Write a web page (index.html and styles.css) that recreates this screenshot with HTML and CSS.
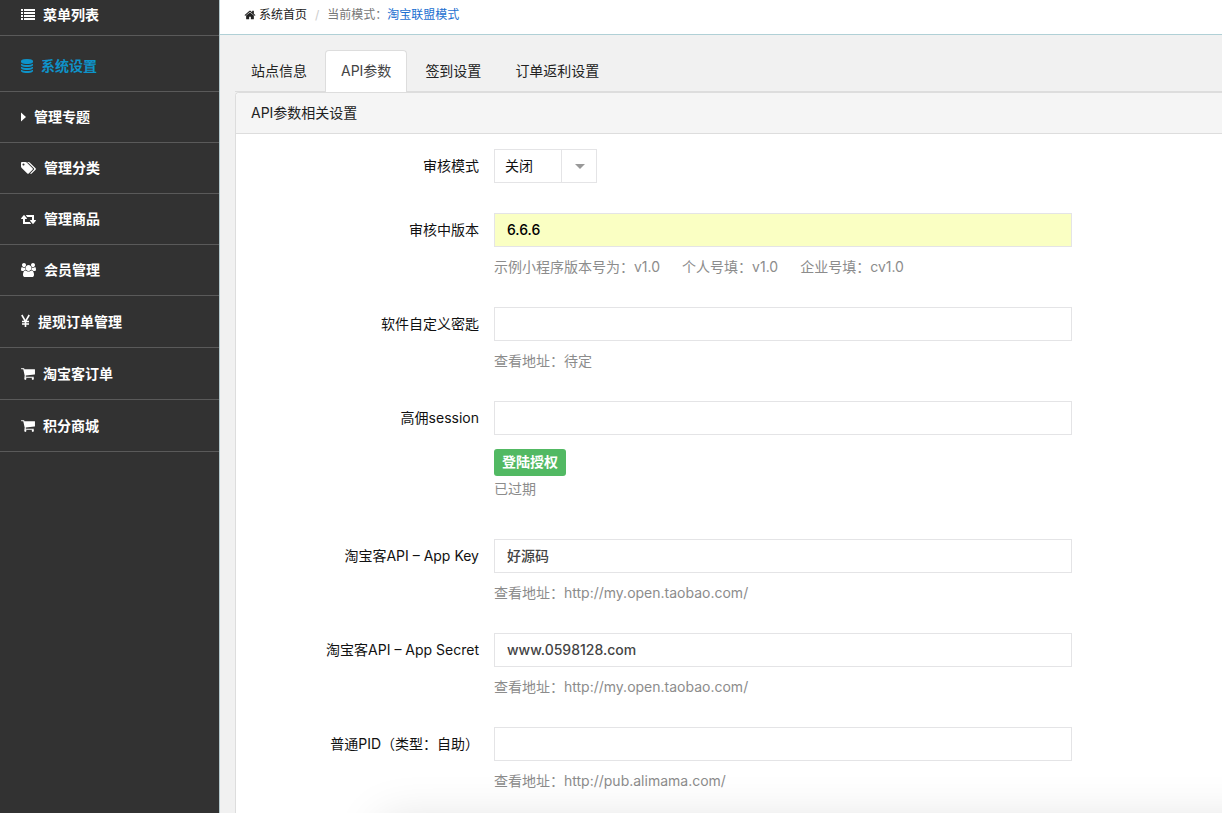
FILE: index.html
```html
<!DOCTYPE html>
<html lang="zh-CN">
<head>
<meta charset="utf-8">
<meta name="viewport" content="width=device-width, initial-scale=1">
<title>系统设置</title>
<link rel="stylesheet" href="styles.css">
</head>
<body>
<svg class="sprite" aria-hidden="true">
  <symbol id="cart" viewBox="0 0 1664 1792"><path d="M640 1536q0 52-38 90t-90 38-90-38-38-90 38-90 90-38 90 38 38 90zm896 0q0 52-38 90t-90 38-90-38-38-90 38-90 90-38 90 38 38 90zm128-1088v512q0 24-16.500 42.500t-40.500 21.500l-1044 122q13 60 13 70 0 16-24 64h920q26 0 45 19t19 45-19 45-45 19h-1024q-26 0-45-19t-19-45q0-11 8-31.500t16-36 21.500-40 15.500-29.500l-177-823h-204q-26 0-45-19t-19-45 19-45 45-19h256q16 0 28.500 6.500t19.500 15.500 13 24.500 8 26 5.500 29.500 4.500 26h1201q26 0 45 19t19 45z"/></symbol>
</svg>
<div class="app">
  <nav class="sidebar" aria-label="菜单">
    <a class="item item-head" href="#">
      <svg class="icon" width="14" height="14" viewBox="0 0 14 14"><path d="M0 1h2v2H0zM3 1h11v2H3zM0 4h2v2H0zM3 4h11v2H3zM0 7h2v2H0zM3 7h11v2H3zM0 10h2v2H0zM3 10h11v2H3z"/></svg>
      <span>菜单列表</span>
    </a>
    <a class="item item-active" href="#">
      <svg class="icon" width="12" height="14" viewBox="0 0 1536 1792"><path d="M768 768q237 0 443-43t325-127v170q0 69-103 128t-280 93.500-385 34.500-385-34.500-280-93.500-103-128v-170q119 84 325 127t443 43zm0 768q237 0 443-43t325-127v170q0 69-103 128t-280 93.500-385 34.500-385-34.500-280-93.500-103-128v-170q119 84 325 127t443 43zm0-384q237 0 443-43t325-127v170q0 69-103 128t-280 93.500-385 34.500-385-34.500-280-93.500-103-128v-170q119 84 325 127t443 43zm0-1152q208 0 385 34.500t280 93.500 103 128v128q0 69-103 128t-280 93.500-385 34.500-385-34.500-280-93.500-103-128v-128q0-69 103-128t280-93.500 385-34.500z"/></svg>
      <span>系统设置</span>
    </a>
    <a class="item" href="#">
      <svg class="icon" width="5" height="14" viewBox="0 0 5 14"><path d="M0 2.500l5 4.500-5 4.500z"/></svg>
      <span>管理专题</span>
    </a>
    <a class="item" href="#">
      <svg class="icon" width="15" height="14" viewBox="128 0 1920 1792"><path d="M576 448q0-53-37.500-90.500t-90.500-37.500-90.500 37.500-37.500 90.500 37.500 90.500 90.500 37.500 90.500-37.500 37.500-90.500zm1067 576q0 53-37 90l-491 492q-39 37-91 37-53 0-90-37l-715-716q-38-37-64.500-101t-26.500-117v-416q0-52 38-90t90-38h416q53 0 117 26.500t102 64.500l715 714q37 39 37 91zm384 0q0 53-37 90l-491 492q-39 37-91 37-36 0-59-14t-53-45l470-470q37-37 37-90 0-52-37-91l-715-714q-38-38-102-64.500t-117-26.500h224q53 0 117 26.500t102 64.500l715 714q37 39 37 91z"/></svg>
      <span>管理分类</span>
    </a>
    <a class="item" href="#">
      <svg class="icon" width="15" height="14" viewBox="0 0 1920 1792"><path d="M1280 1504q0 13-9.500 22.500t-22.500 9.500h-960q-8 0-13.500-2t-9-7-5.500-8-3-11.500-1-11.500v-600h-192q-26 0-45-19t-19-45q0-24 15-41l320-384q19-22 49-22t49 22l320 384q15 17 15 41 0 26-19 45t-45 19h-192v384h576q16 0 25 11l160 192q7 10 7 21zm640-416q0 24-15 41l-320 384q-20 23-49 23t-49-23l-320-384q-15-17-15-41 0-26 19-45t45-19h192v-384h-576q-16 0-25-12l-160-192q-7-9-7-20 0-13 9.500-22.500t22.500-9.500h960q8 0 13.500 2t9 7 5.500 8 3 11.500 1 11.500v600h192q26 0 45 19t19 45z"/></svg>
      <span>管理商品</span>
    </a>
    <a class="item" href="#">
      <svg class="icon" width="15" height="14" viewBox="0 0 1920 1792"><path d="M593 896q-162 5-265 128h-134q-82 0-138-40.500t-56-118.500q0-353 124-353 6 0 43.500 21t97.500 42.500 119 21.500q67 0 133-23-5 37-5 66 0 139 81 256zm1071 637q0 120-73 189.500t-194 69.500h-874q-121 0-194-69.500t-73-189.500q0-53 3.500-103.500t14-109 26.500-108.500 43-97.500 62-81 85.500-53.500 111.500-20q10 0 43 21.500t73 48 107 48 135 21.500 135-21.500 107-48 73-48 43-21.500q61 0 111.500 20t85.500 53.500 62 81 43 97.500 26.500 108.500 14 109 3.500 103.500zm-1024-1277q0 106-75 181t-181 75-181-75-75-181 75-181 181-75 181 75 75 181zm704 384q0 159-112.500 271.500t-271.500 112.500-271.500-112.500-112.500-271.500 112.500-271.500 271.500-112.500 271.500 112.500 112.500 271.500zm576 225q0 78-56 118.500t-138 40.500h-134q-103-123-265-128 81-117 81-256 0-29-5-66 66 23 133 23 59 0 119-21.500t97.500-42.500 43.500-21q124 0 124 353zm-128-609q0 106-75 181t-181 75-181-75-75-181 75-181 181-75 181 75 75 181z"/></svg>
      <span>会员管理</span>
    </a>
    <a class="item item-tall" href="#">
      <svg class="icon icon-line" width="9" height="16" viewBox="0 0 9 16"><path d="M.8 1L4.500 7.500 8.200 1M4.500 7v6M1 7.500h7M1 10h7"/></svg>
      <span>提现订单管理</span>
    </a>
    <a class="item item-tall" href="#">
      <svg class="icon" width="14" height="15"><use href="#cart"/></svg>
      <span>淘宝客订单</span>
    </a>
    <a class="item item-tall" href="#">
      <svg class="icon" width="14" height="15"><use href="#cart"/></svg>
      <span>积分商城</span>
    </a>
  </nav>

  <div class="content">
    <header class="crumbs">
      <a class="home" href="#">
        <svg class="icon" width="12" height="12" viewBox="0 0 1664 1792"><path d="M1408 992v480q0 26-19 45t-45 19h-384v-384h-256v384h-384q-26 0-45-19t-19-45v-480q0-1 .5-3t.5-3l575-474 575 474q1 2 1 6zm223-69l-62 74q-8 9-21 11h-3q-13 0-21-7l-692-577-692 577q-12 8-24 7-13-2-21-11l-62-74q-8-10-7-23.500t11-21.500l719-599q32-26 76-26t76 26l244 204v-195q0-14 9-23t23-9h192q14 0 23 9t9 23v408l219 182q10 8 11 21.500t-7 23.500z"/></svg>
        <span>系统首页</span>
      </a>
      <span class="slash">/</span>
      <span class="mode">当前模式：<a href="#">淘宝联盟模式</a></span>
    </header>

    <main class="main">
      <div class="tabs">
        <a class="tab" href="#">站点信息</a>
        <a class="tab tab-active" href="#">API参数</a>
        <a class="tab" href="#">签到设置</a>
        <a class="tab" href="#">订单返利设置</a>
      </div>
      <section class="panel">
        <h1 class="panel-title">API参数相关设置</h1>
        <form class="form">
          <div class="group">
            <label class="label" for="audit">审核模式</label>
            <div class="field">
              <div class="picker">
                <select id="audit"><option>关闭</option><option>开启</option></select>
                <span class="picker-arrow"></span>
              </div>
            </div>
          </div>
          <div class="group">
            <label class="label" for="version">审核中版本</label>
            <div class="field">
              <input class="input input-filled" id="version" type="text" value="6.6.6">
              <p class="help help-list"><span>示例小程序版本号为：v1.0</span><span>个人号填：v1.0</span><span>企业号填：cv1.0</span></p>
            </div>
          </div>
          <div class="group">
            <label class="label" for="secret">软件自定义密匙</label>
            <div class="field">
              <input class="input" id="secret" type="text">
              <p class="help">查看地址：待定</p>
            </div>
          </div>
          <div class="group group-session">
            <label class="label" for="session">高佣session</label>
            <div class="field">
              <input class="input" id="session" type="text">
              <button class="auth" type="button">登陆授权</button>
              <p class="status">已过期</p>
            </div>
          </div>
          <div class="group">
            <label class="label" for="appkey">淘宝客API – App Key</label>
            <div class="field">
              <input class="input" id="appkey" type="text" value="好源码">
              <p class="help">查看地址：http://my.open.taobao.com/</p>
            </div>
          </div>
          <div class="group">
            <label class="label" for="appsecret">淘宝客API – App Secret</label>
            <div class="field">
              <input class="input" id="appsecret" type="text" value="www.0598128.com">
              <p class="help">查看地址：http://my.open.taobao.com/</p>
            </div>
          </div>
          <div class="group">
            <label class="label" for="pid">普通PID（类型：自助）</label>
            <div class="field">
              <input class="input" id="pid" type="text">
              <p class="help">查看地址：http://pub.alimama.com/</p>
            </div>
          </div>
        </form>
      </section>
    </main>
  </div>
</div>
<div class="bottom-shade"></div>
</body>
</html>
```

FILE: styles.css
```css
* {
  box-sizing: border-box;
}

html,
body {
  height: 100%;
}

body {
  margin: 0;
  overflow: hidden;
  background: #f1f1f1;
  color: #222;
  font: 14px/20px Inter, "Noto Sans CJK SC", sans-serif;
}

a {
  color: inherit;
  text-decoration: none;
}

.sprite {
  display: none;
}

.icon {
  flex: none;
  fill: currentColor;
}

.icon-line {
  fill: none;
  stroke: currentColor;
  stroke-width: 1.6;
}

.app {
  display: flex;
  height: 100vh;
}

/* Sidebar */
.sidebar {
  flex: none;
  width: 220px;
  background: #323232;
  border-right: 1px solid #b4c8cc;
}

.item {
  display: flex;
  align-items: center;
  gap: 8px;
  height: 51px;
  padding-left: 21px;
  border-bottom: 1px solid #5a5a5a;
  color: #fff;
  font-weight: 700;
}

.item-head {
  height: 36px;
  padding-bottom: 5px;
}

.item-active {
  height: 56px;
  padding-top: 4px;
  color: #0e93c9;
}

.item-tall {
  height: 52px;
}

/* Top bar */
.content {
  flex: 1;
  min-width: 0;
}

.crumbs {
  display: flex;
  align-items: center;
  height: 35px;
  padding: 0 24px 4px;
  background: #fff;
  border-bottom: 1px solid #b0d0d6;
  font-size: 12px;
}

.home {
  display: flex;
  align-items: center;
  gap: 3px;
}

.slash {
  padding: 0 8px;
  color: #ccc;
}

.mode {
  color: #777;
}

.mode a {
  color: #1b6fd0;
}

/* Tabs */
.main {
  padding: 15px 0 0 15px;
}

.tabs {
  display: flex;
  gap: 2px;
  border-bottom: 1px solid #ddd;
}

.tab {
  padding: 10px 15px;
  border: 1px solid transparent;
  border-bottom: 0;
  border-radius: 4px 4px 0 0;
}

.tab-active {
  margin-bottom: -1px;
  padding-bottom: 11px;
  background: #fff;
  border-color: #ddd;
  color: #444;
}

/* Panel */
.panel {
  background: #fff;
  border: 1px solid #ddd;
  border-right: 0;
  border-radius: 4px 0 0 0;
}

.panel-title {
  margin: 0;
  padding: 10px 15px;
  background: #f5f5f5;
  border-bottom: 1px solid #ddd;
  border-radius: 4px 0 0 0;
  font-size: 14px;
  font-weight: 400;
}

.form {
  display: flex;
  flex-direction: column;
  gap: 30px;
  padding: 15px 0 30px;
}

.group {
  display: grid;
  grid-template-columns: 243fr 578fr 135fr;
  column-gap: 15px;
}

.group-session {
  margin-bottom: 10px;
}

.label {
  padding: 7px 0;
  color: #111;
  text-align: right;
}

.input {
  display: block;
  width: 100%;
  height: 34px;
  padding: 5px 12px 7px;
  background: #fff;
  border: 1px solid #e4e4e6;
  border-radius: 0;
  color: #444;
  font: inherit;
  font-weight: 500;
  outline: 0;
}

.input-filled {
  background: #faffc3;
  color: #000;
}

.help {
  margin: 10px 0 0;
  color: #8c8c8c;
}

.help-list {
  display: flex;
  gap: 22px;
}

.picker {
  position: relative;
  width: 103px;
}

.picker select {
  display: block;
  width: 100%;
  height: 34px;
  padding: 0 36px 0 10px;
  appearance: none;
  background: #fff;
  border: 1px solid #e4e4e6;
  border-radius: 0;
  color: #111;
  font: inherit;
}

.picker-arrow {
  position: absolute;
  top: 0;
  right: 0;
  bottom: 0;
  display: grid;
  place-items: center;
  width: 36px;
  border-left: 1px solid #e4e4e6;
  pointer-events: none;
}

.picker-arrow::before {
  content: "";
  border: 5px solid transparent;
  border-top-color: #999;
  border-bottom: 0;
}

.auth {
  display: block;
  height: 27px;
  margin-top: 14px;
  padding: 0 8px 2px;
  background: #52b963;
  border: 0;
  border-radius: 3px;
  color: #fff;
  font: inherit;
  font-weight: 700;
}

.status {
  margin: 3px 0 0;
  color: #8c8c8c;
}

/* Soft shade rising from the bottom edge */
.bottom-shade {
  position: fixed;
  top: 100%;
  right: -80px;
  left: 380px;
  height: 80px;
  box-shadow: 0 6px 48px rgba(0, 0, 0, 0.12);
  pointer-events: none;
}
```
